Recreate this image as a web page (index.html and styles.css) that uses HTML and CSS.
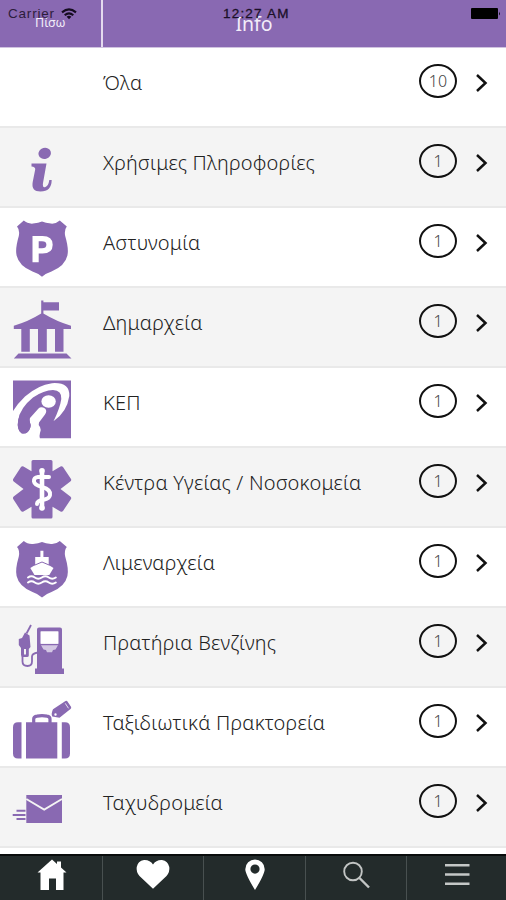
FILE: index.html
```html
<!DOCTYPE html>
<html lang="el">
<head>
<meta charset="utf-8">
<title>Info</title>
<link rel="stylesheet" href="styles.css">
</head>
<body>
<header class="header">
  <div class="status">
    <span class="carrier">Carrier</span>
    <svg class="wifi" viewBox="0 0 16 12"><g fill="none" stroke="#150c20" stroke-width="2.1"><path d="M1 4.4Q8-1.6 15 4.4"/><path d="M3.7 7.2Q8 3.4 12.3 7.2"/></g><path d="M5.6 8.7Q8 6.9 10.4 8.7L8 11.3z" fill="#150c20"/></svg>
    <span class="clock">12:27 AM</span>
    <svg class="battery" viewBox="0 0 30 12"><rect width="27" height="11" rx="1" fill="#000"/><path d="M28 3.5q1.6 2 0 4z" fill="#000"/></svg>
  </div>
  <div class="back">Πίσω</div>
  <div class="title">Info</div>
</header>
<main class="list">
  <div class="row"><span class="icon"></span><span class="label">Όλα</span><span class="badge">10</span><svg class="chev" viewBox="0 0 14 20"><path d="M2 2l8.5 8L2 18"/></svg></div>
  <div class="row"><svg class="icon" viewBox="0 0 100 80"><ellipse cx="44.7" cy="25.4" rx="6.3" ry="5.5" transform="rotate(-15 44.7 25.4)"/><path d="M31.5 35.5H46.5L43 55Q42.3 59.8 45 59.2Q48.5 58.2 49.3 52H51.7Q51.5 63.5 40.5 63.5Q31 63.5 32.7 54L35.2 41.5Q35.5 38.8 31.5 38.5z"/></svg><span class="label">Χρήσιμες Πληροφορίες</span><span class="badge">1</span><svg class="chev" viewBox="0 0 14 20"><path d="M2 2l8.5 8L2 18"/></svg></div>
  <div class="row"><svg class="icon" viewBox="0 0 100 80"><path d="M23.8 12.6Q27.5 16 33 15.6Q38.5 15.2 42 13.6Q45.5 15.2 51 15.6Q56 16 59.8 12.6L66.8 18.6Q64 22 65.2 28Q69 41 67.4 47.5Q65 58 51.5 63.5Q45.5 65.5 42 68.7Q38.5 65.5 32.5 63.5Q19 58 16.6 47.5Q15 41 18.8 28Q20 22 17 18.6z"/><path class="w" fill-rule="evenodd" d="M32.5 28H42.5Q52.7 28 52.7 36.7Q52.7 45.5 42.5 45.5H38.7V54.3H32.5zM38.7 33.3V40.2H42Q46.4 40.2 46.4 36.7Q46.4 33.3 42 33.3z"/></svg><span class="label">Αστυνομία</span><span class="badge">1</span><svg class="chev" viewBox="0 0 14 20"><path d="M2 2l8.5 8L2 18"/></svg></div>
  <div class="row"><svg class="icon" viewBox="0 0 100 80"><path d="M41.2 12.5H43.4V14.3H59V22.4H43.4V25.6Q57 33.8 71 37.8V41H13.8V37.8Q28 33.8 41.2 25.6zM21.3 41H29.8V63.8H21.3zM38 41H46.8V63.8H38zM55 41H63.5V63.8H55zM18.5 65.5H66.5L71.5 70.5H13.8z"/></svg><span class="label">Δημαρχεία</span><span class="badge">1</span><svg class="chev" viewBox="0 0 14 20"><path d="M2 2l8.5 8L2 18"/></svg></div>
  <div class="row"><svg class="icon" viewBox="0 0 100 80"><path d="M13 12.5H71V70.3H13z"/><path class="w" d="M12 44.5Q17 36 25 28.5Q38 17 52 15.2Q70 14 69.3 28Q67 44 53.5 53.3Q60 40 61.3 31Q62 22.5 53 22Q44 22 33 29.5Q20 40 18.2 52Q16.5 62 21.5 65.3Q28 67 30.5 59Q31.5 57 29.8 54Q28.5 52 30 50L38.5 40.5Q41 38 45 40.5Q47.5 42.5 45 46.5L39 54.5Q38 56.5 40 59Q41.5 62 40 65Q39 68 40 71H12z"/><path d="M18.2 52Q16.5 62 21.5 65.3Q28 67 30.5 59L29.5 50L20 46z"/><ellipse class="w" cx="48.6" cy="33.5" rx="7.2" ry="6.2"/></svg><span class="label">ΚΕΠ</span><span class="badge">1</span><svg class="chev" viewBox="0 0 14 20"><path d="M2 2l8.5 8L2 18"/></svg></div>
  <div class="row"><svg class="icon" viewBox="0 0 100 80"><path d="M33 12H51Q52.5 12 52.5 13.5V23.2L60.5 18.5Q62 17.8 63 19L71 31Q71.7 32.5 70.3 33.5L60.5 41L70.3 48.5Q71.7 49.5 71 51L63 63Q62 64.2 60.5 63.5L52.5 58.8V69Q52.5 70.5 51 70.5H33Q31.5 70.5 31.5 69V58.8L23.5 63.5Q22 64.2 21 63L13.2 51Q12.5 49.5 13.7 48.5L23.5 41L13.7 33.5Q12.5 32.5 13.2 31L21 19Q22 17.8 23.5 18.5L31.5 23.2V13.5Q31.5 12 33 12z"/><g class="line"><path d="M42 24V60" stroke-width="4.6"/><path d="M49 29H38Q33.5 29.5 34 33.5Q34.5 37 42 39Q51 41.5 50 47Q49.5 50.5 44.5 51.5Q37 52.5 37 56" stroke-width="4"/></g><circle class="w" cx="42" cy="22.8" r="2.8"/><circle class="w" cx="42" cy="60" r="2.8"/></svg><span class="label">Κέντρα Υγείας / Νοσοκομεία</span><span class="badge">1</span><svg class="chev" viewBox="0 0 14 20"><path d="M2 2l8.5 8L2 18"/></svg></div>
  <div class="row"><svg class="icon" viewBox="0 0 100 80"><path d="M23.8 13Q27.5 16.4 33 16Q38.5 15.6 42 14Q45.5 15.6 51 16Q56 16.4 59.8 13L66.8 19Q64 22.4 65.2 28.4Q69 41.4 67.4 47.9Q65 58.4 51.5 63.9Q45.5 65.9 42 69.5Q38.5 65.9 32.5 63.9Q19 58.4 16.6 47.9Q15 41.4 18.8 28.4Q20 22.4 17 19z"/><path class="w" d="M40.4 22.8H43.4V29H48.7V37L53.5 40L49.3 47H34.5L30.3 40L35.2 37V29H40.4z"/><path d="M34.5 37.2L42 34L49.5 37.2" fill="none" stroke="#8969b2" stroke-width="1"/><g class="line" stroke-width="2"><path d="M28 49.5q3.4-2.4 6.8 0t7 0t7 0t7 0M28 54.5q3.4-2.4 6.8 0t7 0t7 0t7 0"/></g></svg><span class="label">Λιμεναρχεία</span><span class="badge">1</span><svg class="chev" viewBox="0 0 14 20"><path d="M2 2l8.5 8L2 18"/></svg></div>
  <div class="row"><svg class="icon" viewBox="0 0 100 80"><path fill-rule="evenodd" d="M39 19.5H60Q62 19.5 62 21.5V60.5H64V66H35V60.5H37V21.5Q37 19.5 39 19.5zM40.7 23.5V35.7H58.3V23.5z"/><path d="M41 37.3H58L55.5 41.5L53 42L52 44.3H47L46 42L43.5 41.5z" fill="#d3c7e3"/><path class="w" d="M40.7 23.5H58.3V35.7H40.7z"/><path d="M31 17L26.5 25.5" stroke="#8969b2" stroke-width="1.8"/><path fill-rule="evenodd" d="M25 24.5L29.5 27.5L30.5 39L28.8 41V47.5Q28.8 49 27 49H23Q21 49 21 47V40L18.8 37V31L22 30zM24 41V46.5H26V41z"/><path d="M22.5 48V53.5Q22.5 58 27.5 58Q32 58 32 53.5V48.5Q32 45.5 38 44.5" fill="none" stroke="#8969b2" stroke-width="1.8"/></svg><span class="label">Πρατήρια Βενζίνης</span><span class="badge">1</span><svg class="chev" viewBox="0 0 14 20"><path d="M2 2l8.5 8L2 18"/></svg></div>
  <div class="row"><svg class="icon" viewBox="0 0 100 80"><path d="M18 34.3H21.5V70.5H18Q13 70.5 13 65.5V39.3Q13 34.3 18 34.3zM26 34.3H57.3V70.5H26zM61.8 34.3H65Q70 34.3 70 39.3V65.5Q70 70.5 65 70.5H61.8z"/><path d="M33.7 35V31Q33.7 28.5 37 28.1Q42 27.3 47 28.1Q50 28.5 50 31V35" fill="none" stroke="#8969b2" stroke-width="3.2"/><path fill-rule="evenodd" d="M53 21.3L65.5 13Q66.7 12.3 67.5 13.5L71 18.7Q71.7 20 70.5 21L59.5 29.8L52.3 28.6Q50.8 26 53 21.3zM54.3 26.5a1.2 1.2 0 1 0 2.4 0a1.2 1.2 0 1 0-2.4 0z"/><path d="M65.2 15.3L68.5 20.3" stroke="#fff" stroke-width=".8"/></svg><span class="label">Ταξιδιωτικά Πρακτορεία</span><span class="badge">1</span><svg class="chev" viewBox="0 0 14 20"><path d="M2 2l8.5 8L2 18"/></svg></div>
  <div class="row"><svg class="icon" viewBox="0 0 100 80"><path d="M26.3 27H62V55H26.3z"/><path d="M26.3 31L44.2 41.6L62 31" fill="none" stroke="#f4f4f4" stroke-width="1.8"/><path d="M16.5 42.8H25.5M12.7 47H25.5M16.5 51H25.5" fill="none" stroke="#8969b2" stroke-width="1.9"/></svg><span class="label">Ταχυδρομεία</span><span class="badge">1</span><svg class="chev" viewBox="0 0 14 20"><path d="M2 2l8.5 8L2 18"/></svg></div>
</main>
<nav class="tabs">
  <div class="tab"><svg viewBox="0 0 36 36"><path d="M18 2.5L23 7V4.5H27V10.5L32.5 15.5H29.5V33H22V21.5H15V33H6.5V15.5H3.5z"/></svg></div>
  <div class="tab"><svg viewBox="0 0 36 36"><path d="M18 31.8L4.5 19Q1 15 1.7 10Q2.8 4 9 3Q15 2.7 18 7.5Q21 2.7 27 3Q33 4 34.3 10Q35 15 31.5 19z"/></svg></div>
  <div class="tab"><svg viewBox="0 0 36 36"><path fill-rule="evenodd" d="M18 2.5A9.7 9.7 0 0 1 27.7 12.2Q27.7 17 18 33Q8.3 17 8.3 12.2A9.7 9.7 0 0 1 18 2.5zM18 7.5a4.6 4.6 0 1 0 0 9.2a4.6 4.6 0 1 0 0-9.2z"/></svg></div>
  <div class="tab"><svg viewBox="0 0 36 36"><g fill="none" stroke="#c2c5c4" stroke-width="1.9"><circle cx="14" cy="14.5" r="8.8"/><path d="M20.5 21L30 30.5" stroke-width="2.4"/></g></svg></div>
  <div class="tab"><svg viewBox="0 0 36 36"><path d="M5 8.3H29.5M5 17.5H29.5M5 26.7H29.5" stroke="#c5c8c7" stroke-width="2.5"/></svg></div>
</nav>
</body>
</html>
```
FILE: styles.css
```css
* { box-sizing: border-box; }
body {
  margin: 0;
  width: 506px;
  height: 900px;
  overflow: hidden;
  display: flex;
  flex-direction: column;
  background: #fff;
  font-family: "Noto Sans", "Open Sans", sans-serif;
}
.header {
  position: relative;
  flex: none;
  display: flex;
  height: 48px;
  background: #8969b2;
  border-bottom: 1px solid #d0c3e0;
  color: #f3edf9;
}
.back {
  width: 103px;
  border-right: 2px solid #e4daee;
  font-size: 12.5px;
  line-height: 18px;
  padding: 14px 0 0 35px;
}
.title {
  flex: 1;
  padding: 11px 101px 0 0;
  text-align: center;
  font-size: 19.5px;
  line-height: 26px;
}
.status {
  position: absolute;
  inset: 0 0 auto 0;
  height: 27px;
  display: flex;
  align-items: center;
  padding: 0 5px 0 8px;
  color: #1b1028;
  font: 13px/27px "Liberation Sans", sans-serif;
}
.carrier { width: 53px; font-size: 13.5px; letter-spacing: .8px; opacity: .85; }
.wifi { width: 16px; height: 12px; }
.clock { width: 100px; margin-left: 146px; font-size: 13.5px; letter-spacing: 1.2px; -webkit-text-stroke: .3px; }
.battery { width: 30px; height: 12px; margin-left: auto; }
.list { flex: none; }
.row {
  height: 80px;
  display: flex;
  align-items: flex-start;
  border-bottom: 2px solid #e9e9e9;
}
.row:nth-child(even) { background: #f4f4f4; }
.icon { flex: none; width: 100px; height: 80px; fill: #8969b2; }
.icon .w { fill: #fff; }
.icon .line { fill: none; stroke: #fff; stroke-linecap: round; }
.label {
  flex: 1;
  padding: 20px 0 0 3px;
  font-size: 20px;
  font-weight: 300;
  letter-spacing: .2px;
  line-height: 30px;
  color: #222;
  white-space: nowrap;
}
.badge {
  flex: none;
  width: 38px;
  height: 34px;
  margin-top: 16px;
  border: 2px solid #111;
  border-radius: 50%;
  font-size: 16px;
  font-weight: 300;
  line-height: 30px;
  text-align: center;
  color: #444;
}
.chev {
  flex: none;
  width: 14px;
  height: 20px;
  margin: 25px 17.5px 0 17.5px;
  fill: none;
  stroke: #111;
  stroke-width: 2.5;
}
.tabs {
  flex: none;
  width: 508px;
  height: 46px;
  margin-top: 6px;
  padding-left: 1px;
  display: flex;
  background: #232b2b;
  border-top: 2px solid #090c0c;
}
.tab {
  flex: 1;
  display: flex;
  justify-content: center;
  padding: 1px 0 0 1px;
  border-right: 1px solid #485050;
}
.tab:last-child { border: 0; }
.tab svg { width: 36px; height: 36px; fill: #fff; }
```
